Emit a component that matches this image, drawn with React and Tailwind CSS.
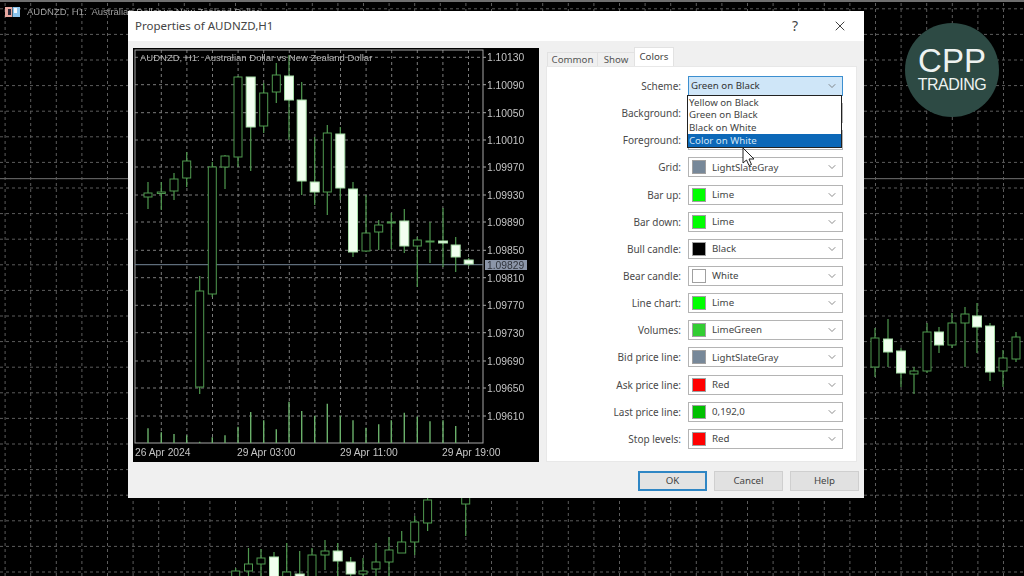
import React from "react";
import { X, ChevronDown } from "lucide-react";

const inner = [
  [148, 182, 209, 193, 197, 0], [161.3, 182, 210, 192, 193.5, 0], [174, 173, 200, 179, 191, 0], [186.7, 152, 187, 161, 178, 0],
  [199.7, 276, 394, 291, 387, 0], [212.3, 162, 297, 167, 294, 0], [225, 155, 189, 156, 167, 0], [238, 76, 167, 77, 157, 0],
  [250.7, 77, 171, 77, 127, 1], [263.7, 83, 133, 93, 126, 0], [276.3, 63, 103, 75, 92, 0], [289, 55, 140, 76, 100, 1],
  [301.7, 82, 195, 100, 181, 1], [314.7, 137, 205, 182, 192, 1], [327.3, 125, 215, 133, 192, 0], [340.3, 127, 200, 134, 188, 1],
  [353, 182, 257, 189, 252, 1], [366, 195, 252, 233, 251, 0], [378.7, 220, 250, 225, 232, 0], [391.3, 213, 249, 222, 223, 0],
  [404.3, 209, 253, 221, 246, 1], [417.3, 237, 287, 240, 246, 0], [430, 222, 263, 241, 242, 0], [443, 208, 267, 241, 243, 1],
  [455.7, 237, 272, 245, 257, 1], [468.7, 258, 266, 260, 264, 1],
];

const outer = [
  [875, 328, 377, 338, 367, 0], [888, 319, 367, 339, 352, 1], [901, 348, 387, 351, 373, 1], [914, 367, 394, 371, 374, 0],
  [927, 323, 373, 332, 371, 0], [939, 327, 353, 332, 345, 1], [952, 313, 348, 323, 345, 0], [965, 307, 367, 314, 323, 0],
  [977, 303, 353, 316, 327, 1], [990, 323, 381, 326, 372, 1], [1003, 350, 387, 358, 371, 0], [1016, 332, 362, 337, 359, 0],
  [235.7, 568, 580, 571, 580, 0], [248.5, 548, 580, 564, 571, 0], [261, 549, 580, 558, 564, 0], [274, 552, 580, 557, 580, 1],
  [286.7, 543, 580, 572, 580, 0], [299.7, 551, 580, 574, 580, 1], [312, 548, 580, 555, 580, 0], [325, 540, 570, 551, 555, 0],
  [337.7, 543, 580, 551, 561, 1], [350.7, 557, 580, 562, 574, 1], [363, 558, 580, 571, 574, 0], [376, 543, 580, 562, 569, 0],
  [389, 537, 580, 550, 562, 0], [401.7, 531, 553, 542, 553, 0], [414.7, 516, 555, 522, 542, 0], [427.6, 498, 531, 500, 523, 0],
  [465.7, 497, 536, 497, 504, 0],
];

const vols = [
  [148, 565], [161.3, 577], [174, 582], [186.7, 586], [199.7, 605], [212.3, 592], [225, 586], [238, 560], [250.7, 516],
  [263.7, 541], [276.3, 568], [289, 485], [301.7, 513], [314.7, 527], [327.3, 491], [340.3, 527], [353, 541], [366, 563],
  [378.7, 553], [391.3, 541], [404.3, 518], [417.3, 530], [430, 544], [443, 541], [455.7, 558],
];

const prices = [
  ["1.10130", 57.3], ["1.10090", 84.7], ["1.10050", 112.7], ["1.10010", 140], ["1.09970", 167], ["1.09930", 195], ["1.09890", 222],
  ["1.09850", 250.3], ["1.09810", 277.7], ["1.09770", 305.3], ["1.09730", 332.7], ["1.09690", 361], ["1.09650", 388], ["1.09610", 416],
];

const rows = [
  ["Scheme:", "Green on Black", null, true],
  ["Background:", "", "#000000"],
  ["Foreground:", "", "#ffffff"],
  ["Grid:", "LightSlateGray", "#778899"],
  ["Bar up:", "Lime", "#00ff00"],
  ["Bar down:", "Lime", "#00ff00"],
  ["Bull candle:", "Black", "#000000"],
  ["Bear candle:", "White", "#ffffff"],
  ["Line chart:", "Lime", "#00ff00"],
  ["Volumes:", "LimeGreen", "#32cd32"],
  ["Bid price line:", "LightSlateGray", "#778899"],
  ["Ask price line:", "Red", "#ff0000"],
  ["Last price line:", "0,192,0", "#00c000"],
  ["Stop levels:", "Red", "#ff0000"],
];

function Candles({ data }) {
  return data.map(([x, wt, wb, bt, bb, white]) => (
    <g key={`${x}-${wt}`}>
      <line x1={x} x2={x} y1={wt} y2={wb} stroke="#4f994f" strokeWidth="1.2" />
      <rect
        x={white ? x - 4.5 : x - 4}
        y={bt}
        width={white ? 9 : 8}
        height={Math.max(bb - bt, 1)}
        fill={white ? "#f2fff0" : "#000000"}
        stroke={white ? "#a6dca6" : "#4f994f"}
        strokeWidth="1"
      />
    </g>
  ));
}

function Backdrop() {
  const xs = Array.from({ length: 40 }, (_, k) => 5.1 + 25.6 * k);
  const ys = Array.from({ length: 23 }, (_, k) => 8.8 + 25.6 * k);
  return (
    <svg className="absolute inset-0 blur-[0.4px]" width="1024" height="576" viewBox="0 0 1024 576">
      {xs.map((x) => (
        <line key={x} x1={x} x2={x} y1="3" y2="576" stroke="#5c5c5c" strokeWidth="1" strokeDasharray="3 3" />
      ))}
      {ys.map((y) => (
        <line key={y} x1="0" x2="1024" y1={y} y2={y} stroke="#5c5c5c" strokeWidth="1" strokeDasharray="3 3" />
      ))}
      <rect x="0" y="0" width="1024" height="2" fill="#6f6f6f" />
      <rect x="0" y="178" width="1024" height="1.2" fill="#5e5e5e" />
      <Candles data={outer} />
      <rect x="5" y="7" width="7" height="10" fill="#e8a8a0" />
      <rect x="12.5" y="7" width="7.5" height="10" fill="#8cc4ec" />
      <rect x="8" y="9" width="3" height="6" fill="#2a2a3a" />
      <rect x="14" y="8" width="3" height="5" fill="#f4f8fc" />
      <text x="27" y="15" fontSize="9.5" fill="#a0a0a0" fontFamily="'Liberation Sans', sans-serif" xmlSpace="preserve">
        AUDNZD, H1:  Australian Dollar vs New Zealand Dollar
      </text>
    </svg>
  );
}

function ChartPreview() {
  const xs = Array.from({ length: 13 }, (_, k) => 161.3 + 25.6 * k);
  return (
    <svg className="block blur-[0.4px]" width="406" height="414" viewBox="133 48 406 414">
      <rect x="133" y="48" width="406" height="414" fill="#000000" />
      {xs.map((x) => (
        <line key={x} x1={x} x2={x} y1="50" y2="443" stroke="#7c7c7c" strokeWidth="1" strokeDasharray="3 3" />
      ))}
      {prices.map(([, y]) => (
        <line key={y} x1="135" x2="483" y1={y} y2={y} stroke="#7c7c7c" strokeWidth="1" strokeDasharray="3 3" />
      ))}
      <rect x="135" y="50" width="348" height="393" fill="none" stroke="#a6a6a6" strokeWidth="1" />
      <line x1="135" x2="483" y1="264.7" y2="264.7" stroke="#778899" strokeWidth="1" />
      <Candles data={inner} />
      {vols.map(([x, t]) => (
        <line key={x} x1={x} x2={x} y1={240 + t / 3} y2="443" stroke="#6ab06a" strokeWidth="1.4" />
      ))}
      <g fontFamily="'Liberation Sans', sans-serif" fontSize="10.3" fill="#c4c4c4">
        <text x="140" y="60.5" fontSize="9.5" fill="#b4b4b4" xmlSpace="preserve">AUDNZD, H1:  Australian Dollar vs New Zealand Dollar</text>
        {prices.map(([p, y]) => (
          <g key={p}>
            <line x1="483" x2="486" y1={y} y2={y} stroke="#a6a6a6" />
            <text x="487" y={y + 3.8}>{p}</text>
          </g>
        ))}
        <rect x="485" y="260" width="42" height="10" fill="#8b95a8" />
        <text x="487" y="268.6" fill="#30343c">1.09829</text>
        <text x="135" y="456">26 Apr 2024</text>
        <text x="237" y="456">29 Apr 03:00</text>
        <text x="340" y="456">29 Apr 11:00</text>
        <text x="442" y="456">29 Apr 19:00</text>
      </g>
    </svg>
  );
}

function Row({ label, value, swatch, focus }) {
  return (
    <div className="flex items-center gap-[7px] h-5">
      <div className="w-[134px] text-right text-[10px] text-[#4a4a4a]">{label}</div>
      <div
        className={
          focus
            ? "w-[155px] h-5 flex items-center pl-[2px] pr-[4px] border border-[#3c8fd0] bg-[#cfe6f8] text-[#333]"
            : "w-[155px] h-5 flex items-center pl-[3px] pr-[4px] border border-[#b4b4b4] bg-white text-[#444]"
        }
      >
        {swatch && <span className="w-[14px] h-[14px] mr-[6px] border border-[#a0a0a0]" style={{ backgroundColor: swatch }} />}
        <span className="flex-1 whitespace-nowrap">{value}</span>
        <ChevronDown size={12} strokeWidth={1.5} className="text-[#666]" />
      </div>
    </div>
  );
}

function Btn({ children, primary }) {
  return (
    <div
      className={
        primary
          ? "w-[69px] h-5 flex items-center justify-center bg-[#e3e3e3] border-2 border-[#2f86c4] text-[#444]"
          : "w-[69px] h-5 flex items-center justify-center bg-[#e1e1e1] border border-[#cfcfcf] text-[#444]"
      }
    >
      {children}
    </div>
  );
}

export default function App() {
  return (
    <div className="relative w-[1024px] h-[576px] overflow-hidden bg-black font-['Noto_Sans','Open_Sans',sans-serif] text-[9.7px] leading-none">
      <Backdrop />

      <div className="absolute left-[128px] top-[11px] w-[736px] h-[487px] flex flex-col bg-[#f0f0f0]">
        <div className="h-[30px] shrink-0 bg-white flex items-center pl-[7px] pr-[16px]">
          <span className="flex-1 text-[11.5px] text-[#444]">Properties of AUDNZD,H1</span>
          <span className="text-[14px] text-[#444] mr-[34px]">?</span>
          <X size={16} strokeWidth={1.4} className="text-[#333]" />
        </div>

        <div className="flex pl-[5px] pt-[7px]">
          <div className="w-[406px] h-[414px] shrink-0 bg-black">
            <ChartPreview />
          </div>
          <div className="relative ml-[7px] w-[311px]">
            <div className="h-[18px] flex items-end pl-[1px] text-[#555]">
              <div className="w-[50px] h-[14px] flex items-center justify-center bg-[#f0f0f0] border-t border-l border-[#e2e2e2]">Common</div>
              <div className="w-[37px] h-[14px] flex items-center justify-center bg-[#f0f0f0] border-t border-l border-[#e2e2e2]">Show</div>
              <div className="w-[40px] h-[19px] flex items-center justify-center bg-white text-[#444] border-x border-t border-[#e2e2e2]">Colors</div>
            </div>
            <div className="h-[396px] bg-white pt-[9px] flex flex-col gap-[7.15px] border border-[#e8e8e8]">
              {rows.map(([label, value, swatch, focus]) => (
                <Row key={label} label={label} value={value} swatch={swatch} focus={focus} />
              ))}
            </div>
            <div className="absolute left-[141px] top-[47px] w-[155px] h-[53px] bg-white border border-[#222] text-[#444] flex flex-col">
              <div className="h-[13px] pl-px flex items-center">Yellow on Black</div>
              <div className="h-[13px] pl-px flex items-center">Green on Black</div>
              <div className="h-[13px] pl-px flex items-center">Black on White</div>
              <div className="h-[13px] pl-px flex items-center bg-[#0c68b8] text-[#cfe4f6]">Color on White</div>
            </div>
            <svg className="absolute left-[196px] top-[99px]" width="13" height="20" viewBox="0 0 13 20">
              <path d="M1 1 L1 16 L4.5 13 L7 18.5 L9.5 17.5 L7 12 L12 12 Z" fill="#ffffff" stroke="#222222" strokeWidth="1" />
            </svg>
          </div>
        </div>

        <div className="flex justify-end gap-[7px] pr-[5px] mt-[9px]">
          <Btn primary>OK</Btn>
          <Btn>Cancel</Btn>
          <Btn>Help</Btn>
        </div>
      </div>

      <div className="absolute left-[905px] top-[22.5px] w-[94px] h-[94px] rounded-full bg-[#2d4a44] flex flex-col items-center pt-[21px] text-[#eef2f0] font-['Liberation_Sans',sans-serif]">
        <span className="text-[33px] leading-[33px] font-normal">CPP</span>
        <span className="text-[16px] leading-[15px] tracking-[-0.5px]">TRADING</span>
      </div>
    </div>
  );
}
